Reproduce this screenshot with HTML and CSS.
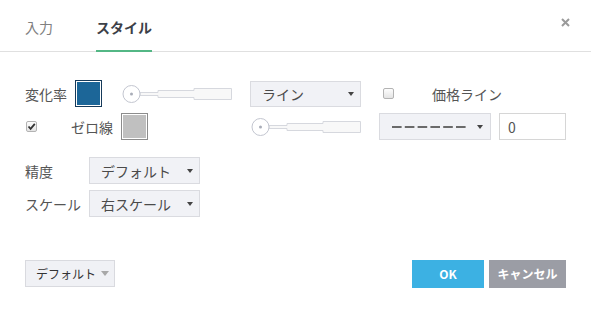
FILE: index.html
```html
<!DOCTYPE html>
<html lang="ja">
<head>
<meta charset="utf-8">
<link rel="stylesheet" href="styles.css">
</head>
<body>
<div class="dialog">
  <div class="header">
    <div class="tab">入力</div>
    <div class="tab active">スタイル</div>
    <div class="close"><svg width="9" height="9" viewBox="0 0 9 9"><path d="M1 1L8 8M8 1L1 8" stroke="#9a9a9a" stroke-width="2"/></svg></div>
  </div>
  <div class="content">
    <div class="row row1">
      <span class="label">変化率</span>
      <span class="swatch blue"></span>
      <svg class="slider s1" width="110" height="20" viewBox="0 0 110 20"><path d="M18 8.5H36V6.5H72V4.5H109.5V15.5H72V13.5H36V11.5H18Z" fill="#f8f8f8" stroke="#d6d8de"/><circle cx="9.5" cy="10" r="8.5" fill="#fff" stroke="#c3c6d0"/><circle cx="9.5" cy="10" r="1.5" fill="#a9adb8"/></svg>
      <div class="select sel-line"><span>ライン</span><i class="arrow"></i></div>
      <span class="check cb1"></span>
      <span class="label price">価格ライン</span>
    </div>
    <div class="row row2">
      <span class="check checked cb2"><svg width="9" height="9" viewBox="0 0 9 9"><path d="M1.5 4.5L3.6 6.8L7.8 1.8" fill="none" stroke="#333" stroke-width="1.8"/></svg></span>
      <span class="label zero">ゼロ線</span>
      <span class="swatch gray"></span>
      <svg class="slider s2" width="110" height="20" viewBox="0 0 110 20"><path d="M18 8.5H36V6.5H72V4.5H109.5V15.5H72V13.5H36V11.5H18Z" fill="#f8f8f8" stroke="#d6d8de"/><circle cx="9.5" cy="10" r="8.5" fill="#fff" stroke="#c3c6d0"/><circle cx="9.5" cy="10" r="1.5" fill="#a9adb8"/></svg>
      <div class="select sel-dash"><svg width="74" height="4" viewBox="0 0 74 4"><line x1="0" y1="2" x2="74" y2="2" stroke="#6a6a6a" stroke-width="2" stroke-dasharray="9.6 3.2"/></svg><i class="arrow"></i></div>
      <div class="input">0</div>
    </div>
    <div class="row row3">
      <span class="label wide">精度</span>
      <div class="select sel-wide"><span>デフォルト</span><i class="arrow"></i></div>
    </div>
    <div class="row row4">
      <span class="label wide">スケール</span>
      <div class="select sel-wide"><span>右スケール</span><i class="arrow"></i></div>
    </div>
  </div>
  <div class="footer">
    <div class="btn-default">デフォルト<i class="arrow big"></i></div>
    <div class="buttons">
      <div class="btn ok">OK</div>
      <div class="btn cancel">キャンセル</div>
    </div>
  </div>
</div>
</body>
</html>
```

FILE: styles.css
```css
* { box-sizing: border-box; }
body {
  margin: 0;
  background: #fff;
  font-family: "Noto Sans CJK JP", "Noto Sans", sans-serif;
  font-size: 14px;
  color: #555;
}
.dialog { width: 591px; height: 312px; }
.header {
  height: 52px;
  border-bottom: 1px solid #e0e0e0;
  display: flex;
  padding-left: 25px;
  gap: 43px;
}
.tab {
  height: 51px;
  display: flex;
  align-items: center;
  font-size: 14px;
  color: #808080;
  line-height: 1;
  padding-top: 2px;
}
.tab.active {
  height: 52px;
  margin-bottom: -1px;
  border-bottom: 2px solid #53b785;
  color: #3c4048;
  font-weight: bold;
  padding-top: 3px;
  width: 56px;
}
.close {
  margin-left: auto;
  margin-right: 21px;
  margin-top: 18px;
  width: 9px;
  height: 9px;
  line-height: 0;
}
.content { padding: 28px 25px 0; }
.row { display: flex; align-items: center; height: 27px; }
.row2 { margin-top: 6px; }
.row3 { margin-top: 17px; }
.row4 { margin-top: 6px; }
.label { line-height: 1; white-space: nowrap; color: #555; }
.label.wide { width: 64px; }
.swatch {
  width: 27px;
  height: 27px;
  padding: 1px;
  background-clip: content-box;
  display: block;
}
.swatch.blue { margin-left: 8px; border: 1px solid #163a5a; background-color: #1c6698; box-shadow: inset 0 0 0 1px #fff; }
.swatch.gray { margin-left: 8px; border: 1px solid #8c8c8c; background-color: #c0c0c0; }
.slider { display: block; }
.s1 { margin-left: 20px; }
.s2 { margin-left: 103px; }
.select {
  height: 27px;
  background: #f1f2f6;
  border: 1px solid #dadbe0;
  display: flex;
  align-items: center;
  padding-left: 11px;
  padding-right: 6px;
  line-height: 1;
  color: #4a4a4a;
}
.select span { flex: 1; }
.arrow {
  width: 0; height: 0;
  border-left: 3.5px solid transparent;
  border-right: 3.5px solid transparent;
  border-top: 4px solid #444;
}
.sel-line { margin-left: 18px; width: 111px; height: 26px; }
.sel-dash { margin-left: 18px; width: 112px; padding-left: 12px; padding-right: 7px; }
.sel-dash svg { display: block; margin-right: auto; }
.sel-wide { width: 111px; }
.check {
  width: 11px;
  height: 11px;
  border: 1px solid #b3b3b3;
  border-radius: 2px;
  background: linear-gradient(#fdfdfd, #e4e4e4);
  display: flex;
  align-items: center;
  justify-content: center;
}
.cb1 { margin-left: 22px; }
.cb2 { margin-left: 1px; }
.price { margin-left: 38px; }
.zero { margin-left: 34px; }
.input {
  margin-left: 8px;
  width: 67px;
  height: 27px;
  border: 1px solid #d6d6d6;
  background: #fff;
  padding-left: 8px;
  display: flex;
  align-items: center;
  line-height: 1;
  color: #555;
}
.footer {
  display: flex;
  justify-content: space-between;
  align-items: flex-start;
  padding: 0 25px;
  margin-top: 43px;
}
.btn-default {
  width: 90px;
  height: 27px;
  background: #f0f1f5;
  border: 1px solid #d9dadf;
  font-size: 12px;
  color: #333;
  display: flex;
  align-items: center;
  padding-left: 10px;
  gap: 5px;
  line-height: 1;
}
.arrow.big {
  border-left-width: 4.5px;
  border-right-width: 4.5px;
  border-top: 5px solid #a8a8a8;
}
.buttons { display: flex; gap: 5px; }
.btn {
  height: 28px;
  display: flex;
  align-items: center;
  justify-content: center;
  color: #fff;
  font-weight: bold;
  font-size: 12px;
  line-height: 1;
}
.btn.ok { width: 72px; background: #3cb1e3; }
.btn.cancel { width: 77px; background: #9b9da5; }
```
